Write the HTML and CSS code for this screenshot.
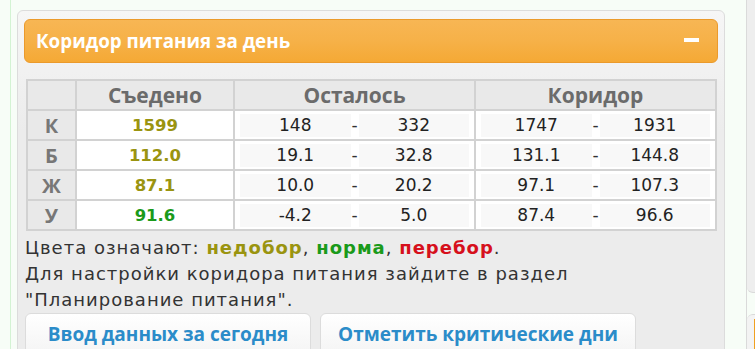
FILE: index.html
```html
<!DOCTYPE html>
<html lang="ru">
<head>
<meta charset="utf-8">
<title>Коридор питания за день</title>
<link rel="stylesheet" href="styles.css">
</head>
<body>
<div class="page">
  <div class="main">
    <div class="panel">
      <div class="panel-head">
        <span class="panel-title">Коридор питания за день</span>
        <span class="collapse"></span>
      </div>
      <table class="corridor">
        <colgroup>
          <col class="c-lbl">
          <col class="c-eaten">
          <col class="c-rng">
          <col class="c-rng">
        </colgroup>
        <thead>
          <tr>
            <th class="lbl"></th>
            <th>Съедено</th>
            <th>Осталось</th>
            <th>Коридор</th>
          </tr>
        </thead>
        <tbody>
          <tr>
            <td class="lbl">К</td>
            <td class="val under">1599</td>
            <td class="rng"><div class="pair"><span class="box">148</span><span class="dash">-</span><span class="box">332</span></div></td>
            <td class="rng"><div class="pair"><span class="box">1747</span><span class="dash">-</span><span class="box">1931</span></div></td>
          </tr>
          <tr>
            <td class="lbl">Б</td>
            <td class="val under">112.0</td>
            <td class="rng"><div class="pair"><span class="box">19.1</span><span class="dash">-</span><span class="box">32.8</span></div></td>
            <td class="rng"><div class="pair"><span class="box">131.1</span><span class="dash">-</span><span class="box">144.8</span></div></td>
          </tr>
          <tr>
            <td class="lbl">Ж</td>
            <td class="val under">87.1</td>
            <td class="rng"><div class="pair"><span class="box">10.0</span><span class="dash">-</span><span class="box">20.2</span></div></td>
            <td class="rng"><div class="pair"><span class="box">97.1</span><span class="dash">-</span><span class="box">107.3</span></div></td>
          </tr>
          <tr>
            <td class="lbl">У</td>
            <td class="val norm">91.6</td>
            <td class="rng"><div class="pair"><span class="box">-4.2</span><span class="dash">-</span><span class="box">5.0</span></div></td>
            <td class="rng"><div class="pair"><span class="box">87.4</span><span class="dash">-</span><span class="box">96.6</span></div></td>
          </tr>
        </tbody>
      </table>
      <p class="note">Цвета означают: <b class="under">недобор</b>, <b class="norm">норма</b>, <b class="over">перебор</b>.<br>Для настройки коридора питания зайдите в раздел<br>"Планирование питания".</p>
      <div class="actions">
        <a class="btn btn-today">Ввод данных за сегодня</a>
        <a class="btn btn-crit">Отметить критические дни</a>
      </div>
    </div>
  </div>
  <div class="side">
    <div class="side-box"></div>
    <div class="side-box2"><span class="side-accent"></span></div>
  </div>
</div>
</body>
</html>
```

FILE: styles.css
```css
html, body {
  margin: 0;
  padding: 0;
}
body {
  background: #f7fdf7;
  font-family: "DejaVu Sans", Verdana, sans-serif;
  color: #333;
  overflow: hidden;
}
.page {
  display: flex;
  height: 349px;
}
.main {
  margin-left: 10px;
  border-left: 1px solid #d3f3d3;
  padding: 10px 20px 0 6px;
  width: 709px;
  flex: none;
}
.panel {
  width: 694px;
  height: 360px;
  border: 1px solid #dcdcdc;
  border-radius: 6px;
  background: linear-gradient(#f6f6f6, #ececec 120px, #ececec);
  padding: 8px 6px 0 6px;
}
.panel-head {
  height: 42px;
  border: 1px solid #eb9a2c;
  border-radius: 6px;
  background: linear-gradient(#f7b654, #f6b148 50%, #f5a935);
  display: flex;
  align-items: center;
  justify-content: space-between;
  padding: 0 18px 0 11px;
}
.panel-title {
  font-family: "Open Sans", sans-serif;
  font-weight: 700;
  font-size: 18.8px;
  color: #fff;
}
.collapse {
  width: 15px;
  height: 4px;
  background: #fff;
  margin-bottom: 2px;
}
.corridor {
  margin: 16px 0 0 2px;
  width: 689px;
  table-layout: fixed;
  border-collapse: collapse;
  border: 2px solid #cfcfcf;
}
.c-lbl { width: 49px; }
.c-eaten { width: 158px; }
.c-rng { width: 241px; }
.corridor th,
.corridor td {
  border: 2px solid #d2d2d2;
  padding: 0;
  text-align: center;
}
.corridor th {
  height: 28px;
  background: #e9e9e9;
  font-family: "Open Sans", sans-serif;
  font-weight: 700;
  font-size: 21px;
  line-height: 26px;
  color: #6b6b6b;
}
.corridor td {
  height: 28px;
  background: #fff;
  font-size: 17px;
}
.corridor .lbl {
  background: #e9e9e9;
  font-family: "Open Sans", sans-serif;
  font-weight: 700;
  font-size: 20px;
  color: #777777;
}
.corridor td.val {
  font-weight: 700;
  font-size: 16.5px;
}
.pair {
  display: flex;
  align-items: center;
  padding: 0 5px;
}
.box {
  flex: 1;
  height: 23px;
  line-height: 23px;
  background: #f8f8f8;
  color: #222;
}
.dash {
  width: 8px;
  text-align: center;
}
.under { color: #9a9410; }
.norm { color: #1a9a1a; }
.over { color: #d6101c; }
.note {
  margin: 4px 0 0 1px;
  font-size: 18px;
  letter-spacing: 1px;
  line-height: 26px;
  color: #333;
}
.note b {
  font-weight: 700;
}
.actions {
  display: flex;
  gap: 9px;
  margin: 0 0 0 1px;
}
.btn {
  display: block;
  height: 46px;
  box-sizing: border-box;
  border: 1px solid #dcdcdc;
  border-radius: 6px;
  background: linear-gradient(#ffffff, #f3f3f3);
  font-family: "Open Sans", sans-serif;
  font-weight: 700;
  font-size: 19px;
  line-height: 26px;
  color: #2b8cc9;
  padding-top: 7px;
  text-align: center;
}
.btn-today { width: 286px; }
.btn-crit { width: 316px; }
.side {
  flex: 1;
  border-left: 1px solid #dadada;
  display: flex;
  flex-direction: column;
}
.side-box {
  height: 300px;
  background: #eeeeee;
  border-bottom: 1px solid #dadada;
  border-bottom-left-radius: 6px;
}
.side-box2 {
  margin-top: 21px;
  flex: 1;
  background: #f3f3f3;
  border-top: 1px solid #dadada;
  border-top-left-radius: 6px;
  padding: 4px 0 0 7px;
}
.side-accent {
  display: block;
  width: 3px;
  height: 30px;
  background: #f0a020;
}
```
